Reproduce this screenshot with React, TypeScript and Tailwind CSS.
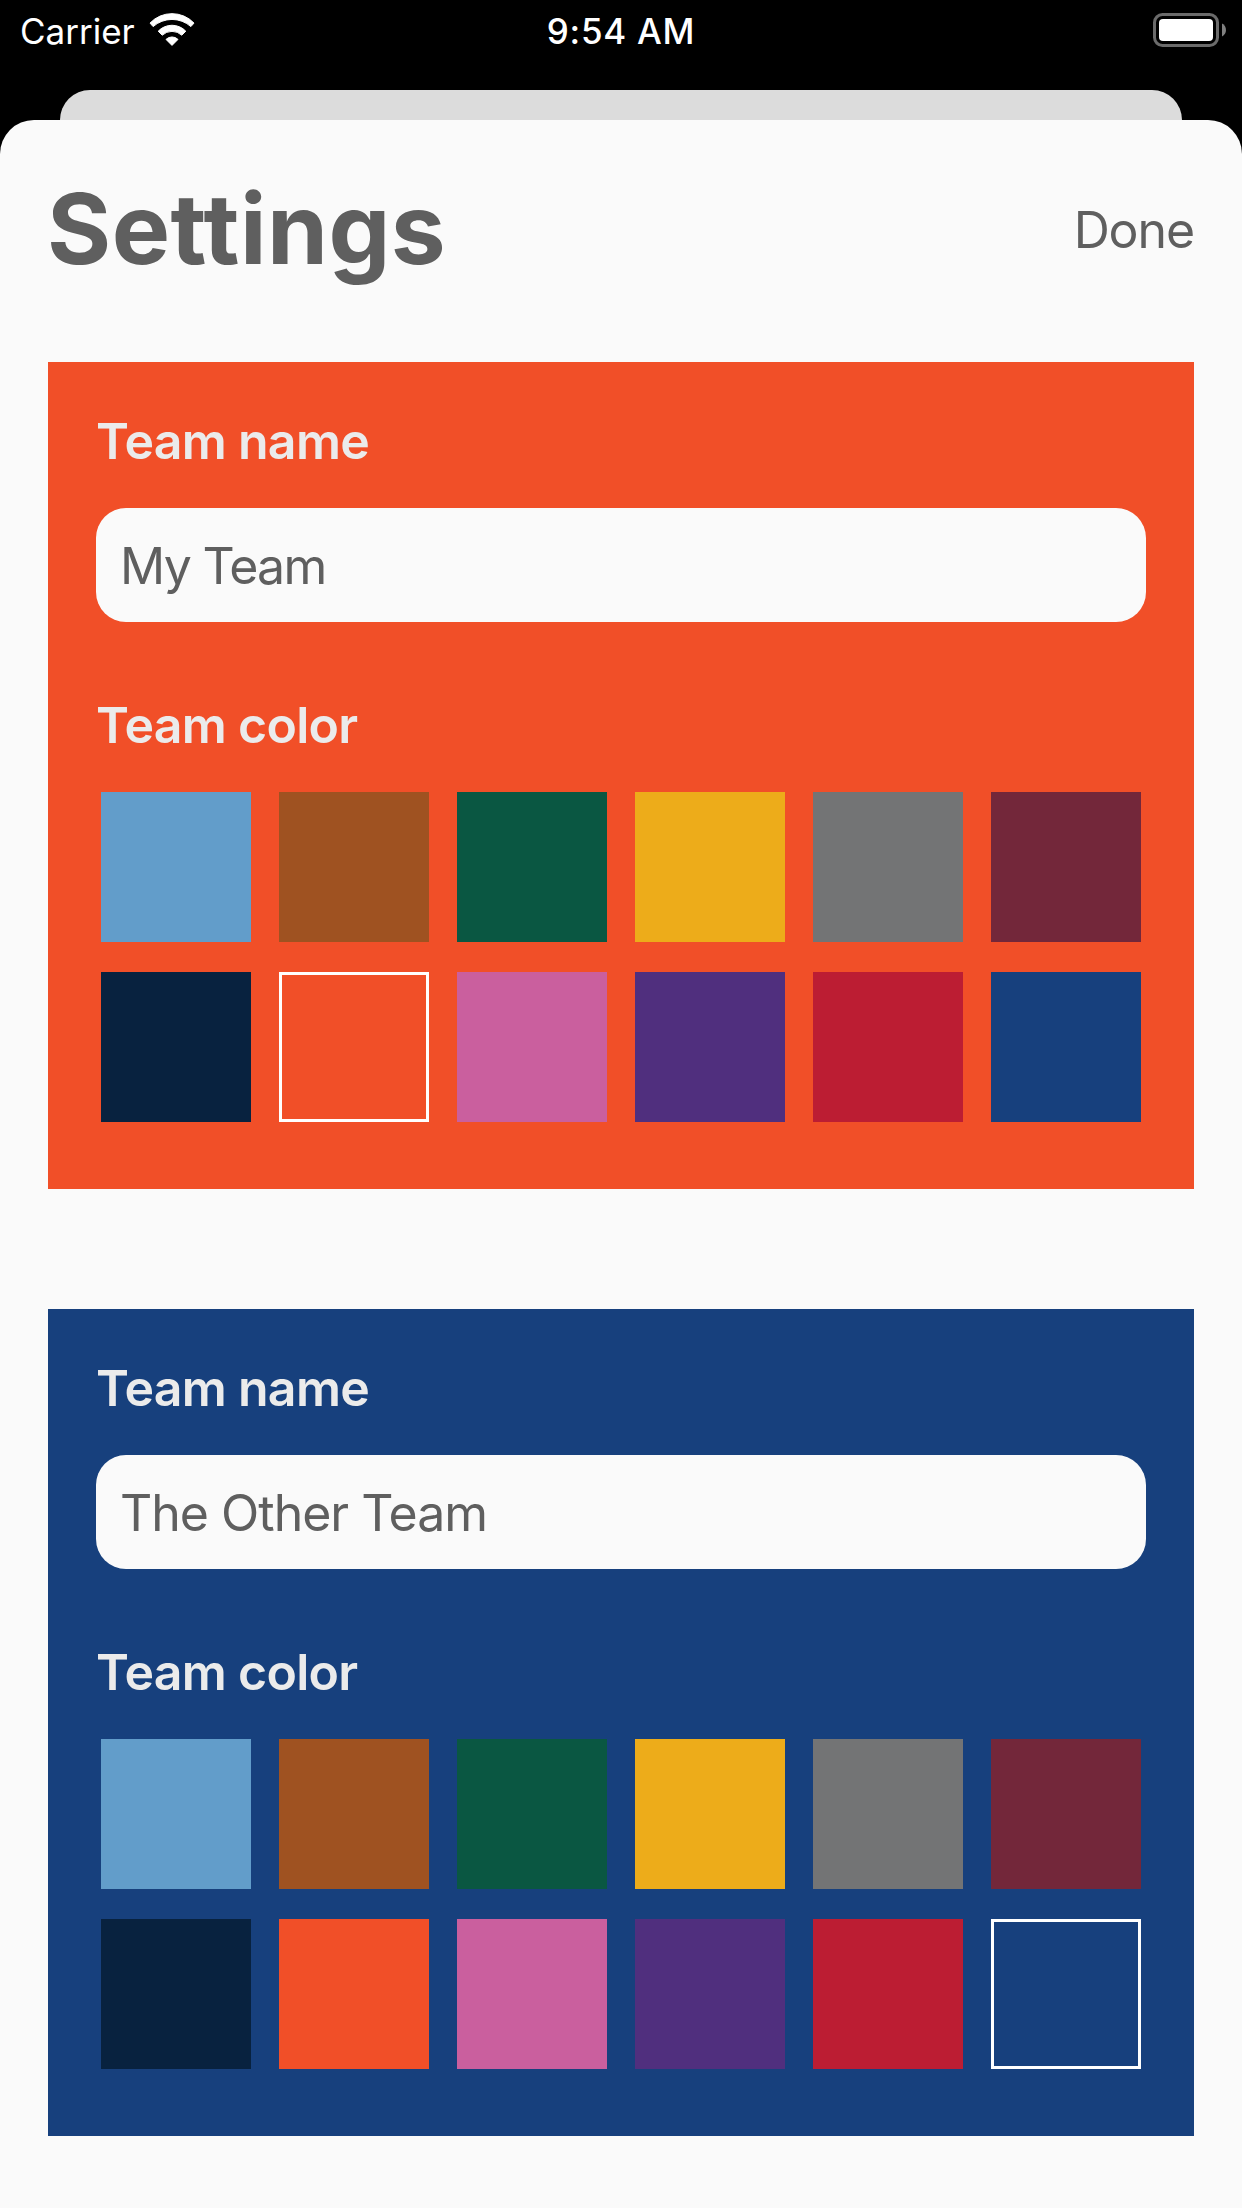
type Swatch = { name: string; bg: string };

const palette: Swatch[] = [
  { name: "Light blue", bg: "bg-[#629dca]" },
  { name: "Brown", bg: "bg-[#9f5221]" },
  { name: "Green", bg: "bg-[#0a5742]" },
  { name: "Gold", bg: "bg-[#edac1a]" },
  { name: "Gray", bg: "bg-[#737475]" },
  { name: "Maroon", bg: "bg-[#73273a]" },
  { name: "Navy", bg: "bg-[#08223f]" },
  { name: "Orange", bg: "bg-[#f14f28]" },
  { name: "Pink", bg: "bg-[#ca5f9e]" },
  { name: "Purple", bg: "bg-[#502f7e]" },
  { name: "Red", bg: "bg-[#bc1d33]" },
  { name: "Blue", bg: "bg-[#17407d]" },
];

function WifiIcon() {
  return (
    <svg width="46" height="34" viewBox="0 0 46 34" fill="white" stroke="white" strokeWidth="1" strokeLinejoin="round">
      <path d="M1 10.1A30.3 30.3 0 0 1 45 10.1L41.9 13.6A28.5 28.5 0 0 0 4.1 13.6Z" />
      <path d="M9.2 18.2A19 19 0 0 1 36.8 18.2L32.8 22.2A14.4 14.4 0 0 0 13.2 22.2Z" />
      <path d="M17 26.4A8.6 8.6 0 0 1 29 26.4L23 32.4Z" />
    </svg>
  );
}

function BatteryIcon() {
  return (
    <svg width="73" height="34" viewBox="0 0 73 34">
      <rect x="1.5" y="1.5" width="63" height="31" rx="8" fill="none" stroke="#6b6b6b" strokeWidth="3" />
      <rect x="6" y="6" width="54" height="22" rx="4" fill="white" />
      <path d="M69 10.5C74.3 12.8 74.3 21.2 69 23.5Z" fill="#808080" />
    </svg>
  );
}

function StatusBar() {
  return (
    <div className="grid h-[60px] grid-cols-3 items-center px-4 text-[35px] text-white">
      <div className="flex items-center gap-[14px] pl-1">
        <span className="pt-0.5 leading-[42px]">Carrier</span>
        <WifiIcon />
      </div>
      <span className="pt-0.5 text-center font-[550] leading-[42px] tracking-[0.7px]">9:54 AM</span>
      <div className="flex justify-end">
        <BatteryIcon />
      </div>
    </div>
  );
}

type TeamCardProps = { name: string; nameTracking: string; color: string; bg: string };

function TeamCard({ name, nameTracking, color, bg }: TeamCardProps) {
  return (
    <section className={`flex h-[827px] flex-col px-12 pt-12 ${bg}`}>
      <h2 className="text-[50px] font-semibold leading-[62px] tracking-[-0.7px] text-[#ebebeb]">Team name</h2>
      <div className={`mt-9 flex h-[114px] items-center rounded-[30px] bg-[#fafafa] px-6 pt-0.5 text-[50px] leading-[60px] text-[#5f5f5f] ${nameTracking}`}>
        {name}
      </div>
      <h2 className="mt-[72px] text-[50px] font-semibold leading-[62px] tracking-[-0.7px] text-[#ebebeb]">Team color</h2>
      <div className="mt-9 grid grid-cols-6 gap-x-7 gap-y-[30px] px-[5px]">
        {palette.map((s) => (
          <button
            key={s.name}
            aria-label={s.name}
            className={`size-[150px] ${s.bg} ${s.name === color ? "border-[3px] border-white" : ""}`}
          />
        ))}
      </div>
    </section>
  );
}

export default function App() {
  return (
    <div className="flex h-[2208px] w-[1242px] flex-col overflow-hidden bg-black font-['Inter',sans-serif]">
      <StatusBar />
      <div className="mx-[60px] mt-[30px] h-[30px] shrink-0 rounded-t-[30px] bg-[#dcdcdc]" />
      <main className="flex-1 rounded-t-[34px] bg-[#fafafa] px-12">
        <header className="mb-6 flex h-[218px] items-center justify-between text-[#5f5f5f]">
          <h1 className="-ml-px text-[98px] font-bold leading-[120px] tracking-[0.5px]">Settings</h1>
          <button className="pt-0.5 text-[50px] leading-[60px] tracking-[-1.1px]">Done</button>
        </header>
        <div className="flex flex-col gap-[120px]">
          <TeamCard name="My Team" nameTracking="tracking-[-1.7px]" color="Orange" bg="bg-[#f14f28]" />
          <TeamCard name="The Other Team" nameTracking="tracking-[-1px]" color="Blue" bg="bg-[#17407d]" />
        </div>
      </main>
    </div>
  );
}
